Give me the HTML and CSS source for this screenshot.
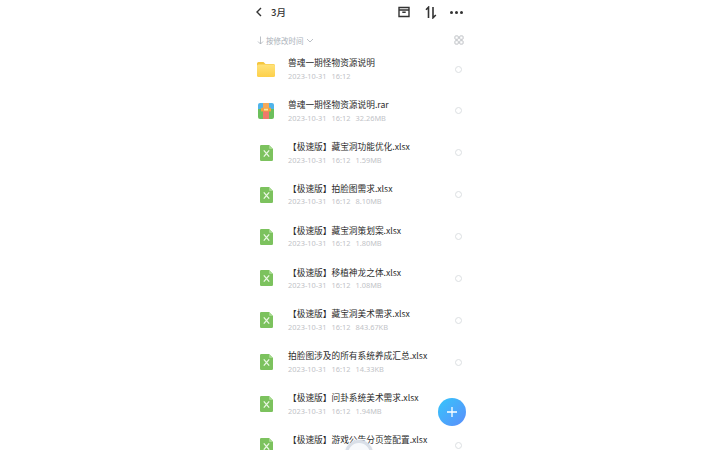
FILE: index.html
```html
<!DOCTYPE html>
<html lang="zh-CN">
<head>
<meta charset="utf-8">
<title>3月</title>
<link rel="stylesheet" href="styles.css">
</head>
<body>
<svg class="defs" width="0" height="0" aria-hidden="true">
  <defs>
    <linearGradient id="folderFill" x1="0" y1="0" x2="0" y2="1"><stop offset="0" stop-color="#ffe27a"/><stop offset="1" stop-color="#fdd04a"/></linearGradient>
  </defs>
  <symbol id="xl" viewBox="0 0 13 16">
    <path d="M1.200 0H9L13 4V14.800A1.200 1.200 0 0 1 11.800 16H1.200A1.200 1.200 0 0 1 0 14.800V1.200A1.200 1.200 0 0 1 1.200 0Z" fill="#7cc25e"/>
    <path d="M9 0L13 4H10A1 1 0 0 1 9 3Z" fill="#a5da8d"/>
    <path d="M3.800 5.300L9.200 11.700M9.200 5.300L3.800 11.700" stroke="#eaf7e3" stroke-width="1.300" fill="none"/>
  </symbol>
</svg>
<main class="phone">
  <header class="top">
    <div class="top-left">
      <svg class="back" width="8" height="10" viewBox="0 0 8 10"><path d="M6 1L2 5L6 9" fill="none" stroke="#333" stroke-width="1.400"/></svg>
      <span class="month">3月</span>
    </div>
    <div class="top-right">
      <svg width="12" height="12" viewBox="0 0 12 12"><path d="M1 1.500H11V10.500H1ZM1 4H11M4.300 6.300H7.700" fill="none" stroke="#333" stroke-width="1.400"/></svg>
      <svg class="order" width="12" height="13" viewBox="0 0 12 13"><path d="M3.500 12V1.200L1 3.700M8 1V11.800L10.800 9" fill="none" stroke="#333" stroke-width="1.600"/></svg>
      <div class="dots"><i></i><i></i><i></i></div>
    </div>
  </header>
  <div class="sort">
    <div class="sort-left">
      <svg width="7" height="9" viewBox="0 0 7 9"><path d="M3.500 0.500V8M1 5.500L3.500 8L6 5.500" fill="none" stroke="#a9b0b8" stroke-width="0.800"/></svg>
      <span>按修改时间</span>
      <svg width="8" height="5" viewBox="0 0 8 5"><path d="M1 1L4 4L7 1" fill="none" stroke="#a9b0b8" stroke-width="0.800"/></svg>
    </div>
    <svg width="10" height="10" viewBox="0 0 10 10"><g fill="none" stroke="#aeb3b8" stroke-width="0.800"><rect x="0.900" y="0.900" width="3.400" height="3.400" rx="0.800"/><rect x="5.700" y="0.900" width="3.400" height="3.400" rx="0.800"/><rect x="0.900" y="5.700" width="3.400" height="3.400" rx="0.800"/><rect x="5.700" y="5.700" width="3.400" height="3.400" rx="0.800"/></g></svg>
  </div>
  <ul class="list">
    <li class="row">
      <svg class="icon folder" width="18" height="15" viewBox="0 0 18 15"><path d="M1.500 0H6.500L8.500 2H16.500A1.500 1.500 0 0 1 18 3.500V5H0V1.500A1.500 1.500 0 0 1 1.500 0Z" fill="#f5c63e"/><rect y="2.500" width="18" height="12.500" rx="1.500" fill="url(#folderFill)"/></svg>
      <div class="info"><div class="name">兽魂一期怪物资源说明</div><div class="meta"><span>2023-10-31</span><span>16:12</span></div></div>
      <i class="radio"></i>
    </li>
    <li class="row">
      <svg class="icon rar" width="16" height="16" viewBox="0 0 16 16"><path d="M2 0H14A2 2 0 0 1 16 2V6H0V2A2 2 0 0 1 2 0Z" fill="#4fb4ea"/><path d="M0 6H16V14A2 2 0 0 1 14 16H2A2 2 0 0 1 0 14Z" fill="#6cbf5c"/><rect x="5" y="0" width="6" height="5" fill="#f5a95a"/><rect x="5" y="8" width="6" height="8" fill="#ee7a6a"/><rect x="3" y="4.800" width="10" height="3.600" fill="#f3a33f"/><rect x="6" y="5.700" width="4" height="1.800" fill="#fde3a8"/></svg>
      <div class="info"><div class="name">兽魂一期怪物资源说明.rar</div><div class="meta"><span>2023-10-31</span><span>16:12</span><span>32.26MB</span></div></div>
      <i class="radio"></i>
    </li>
    <li class="row">
      <svg class="icon xl" width="13" height="16"><use href="#xl"/></svg>
      <div class="info"><div class="name">【极速版】藏宝洞功能优化.xlsx</div><div class="meta"><span>2023-10-31</span><span>16:12</span><span>1.59MB</span></div></div>
      <i class="radio"></i>
    </li>
    <li class="row">
      <svg class="icon xl" width="13" height="16"><use href="#xl"/></svg>
      <div class="info"><div class="name">【极速版】拍脸图需求.xlsx</div><div class="meta"><span>2023-10-31</span><span>16:12</span><span>8.10MB</span></div></div>
      <i class="radio"></i>
    </li>
    <li class="row">
      <svg class="icon xl" width="13" height="16"><use href="#xl"/></svg>
      <div class="info"><div class="name">【极速版】藏宝洞策划案.xlsx</div><div class="meta"><span>2023-10-31</span><span>16:12</span><span>1.80MB</span></div></div>
      <i class="radio"></i>
    </li>
    <li class="row">
      <svg class="icon xl" width="13" height="16"><use href="#xl"/></svg>
      <div class="info"><div class="name">【极速版】移植神龙之体.xlsx</div><div class="meta"><span>2023-10-31</span><span>16:12</span><span>1.08MB</span></div></div>
      <i class="radio"></i>
    </li>
    <li class="row">
      <svg class="icon xl" width="13" height="16"><use href="#xl"/></svg>
      <div class="info"><div class="name">【极速版】藏宝洞美术需求.xlsx</div><div class="meta"><span>2023-10-31</span><span>16:12</span><span>843.67KB</span></div></div>
      <i class="radio"></i>
    </li>
    <li class="row">
      <svg class="icon xl" width="13" height="16"><use href="#xl"/></svg>
      <div class="info"><div class="name">拍脸图涉及的所有系统养成汇总.xlsx</div><div class="meta"><span>2023-10-31</span><span>16:12</span><span>14.33KB</span></div></div>
      <i class="radio"></i>
    </li>
    <li class="row">
      <svg class="icon xl" width="13" height="16"><use href="#xl"/></svg>
      <div class="info"><div class="name">【极速版】问卦系统美术需求.xlsx</div><div class="meta"><span>2023-10-31</span><span>16:12</span><span>1.94MB</span></div></div>
      <i class="radio"></i>
    </li>
    <li class="row">
      <svg class="icon xl" width="13" height="16"><use href="#xl"/></svg>
      <div class="info"><div class="name">【极速版】游戏公告分页签配置.xlsx</div><div class="meta"></div></div>
      <i class="radio"></i>
    </li>
  </ul>
  <div class="fab"><svg width="12" height="12" viewBox="0 0 12 12"><path d="M6 1V11M1 6H11" stroke="#fff" stroke-width="1.300" fill="none"/></svg></div>
  <div class="home-arc"></div>
</main>
</body>
</html>
```
FILE: styles.css
```css
* { box-sizing: border-box; }
html, body { margin: 0; height: 100%; background: #fff; overflow: hidden; }
body {
  font-family: "Noto Sans CJK SC", "Noto Sans", sans-serif;
  color: #333;
  display: flex;
  justify-content: center;
}
.defs { position: absolute; }
.phone {
  position: relative;
  width: 230px;
  height: 450px;
  overflow: hidden;
  background: #fff;
}
.top {
  height: 24px;
  display: flex;
  align-items: center;
  justify-content: space-between;
  padding: 0 12px 0 10px;
}
.top-left { display: flex; align-items: center; gap: 8px; }
.month { font-size: 9.500px; font-weight: 500; color: #333; }
.top-right { display: flex; align-items: center; gap: 13px; }
.order { margin-left: 2px; }
.dots { display: flex; gap: 2px; width: 13px; }
.dots i { width: 3px; height: 3px; border-radius: 50%; background: #333; }
.sort {
  height: 22px;
  margin-top: 5px;
  display: flex;
  align-items: center;
  justify-content: space-between;
  padding: 0 11px 0 12px;
}
.sort-left { display: flex; align-items: center; gap: 2px; font-size: 7.500px; color: #a9b0b8; }
.list {
  list-style: none;
  margin: -2.800px 0 0;
  padding: 0;
  display: grid;
  grid-auto-rows: 41.850px;
}
.row {
  display: flex;
  align-items: center;
  padding: 0 13px 0 12px;
  position: relative;
}
.icon { flex: none; }
.icon.xl { margin: 0 15px 0 3px; }
.icon.folder { margin: 0 13px 0 0; }
.icon.rar { margin: 0 14px 0 1px; }
.info { flex: 1; min-width: 0; }
.name { font-size: 8.700px; line-height: 13px; color: #2b2b2b; white-space: nowrap; }
.meta {
  display: flex;
  gap: 5px;
  min-height: 12px;
  font-size: 7.400px;
  line-height: 12px;
  margin-top: 0.500px;
  color: #bfc3c7;
  font-family: "Noto Sans", sans-serif;
  white-space: nowrap;
}
.radio {
  flex: none;
  width: 7px;
  height: 7px;
  border: 1px solid #dcdfe2;
  border-radius: 50%;
}
.fab {
  position: absolute;
  left: 193px;
  top: 398px;
  width: 28px;
  height: 28px;
  border-radius: 50%;
  background: linear-gradient(135deg, #35c6fb, #5c8dfb);
  display: flex;
  align-items: center;
  justify-content: center;
}
.home-arc {
  position: absolute;
  left: 100px;
  top: 440px;
  width: 28px;
  height: 28px;
  border-radius: 50%;
  background: #f7f9fc;
  border: 3px solid #d9dfe8;
  box-shadow: 0 0 2px #e3e8ef;
}
```
